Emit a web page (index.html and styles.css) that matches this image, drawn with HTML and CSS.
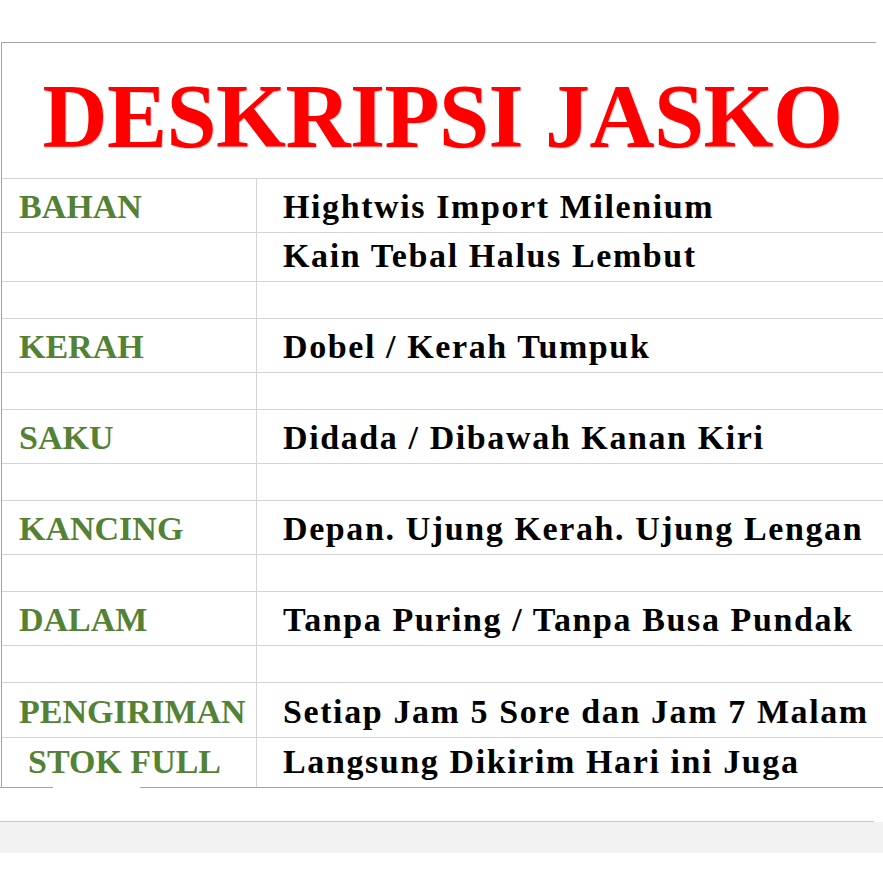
FILE: index.html
```html
<!DOCTYPE html>
<html>
<head>
<meta charset="utf-8">
<link rel="stylesheet" href="styles.css">
</head>
<body>
<div class="page">
  <div class="spacer"></div>
  <div class="topline"></div>
  <div class="sheet">
    <div class="title-row"><h1 class="title">DESKRIPSI JASKO</h1></div>
    <div class="row r54"><div class="label">BAHAN</div><div class="value">Hightwis Import Milenium</div></div>
    <div class="row r49"><div class="label"></div><div class="value">Kain Tebal Halus Lembut</div></div>
    <div class="row r37"><div class="label"></div><div class="value"></div></div>
    <div class="row r54"><div class="label">KERAH</div><div class="value">Dobel / Kerah Tumpuk</div></div>
    <div class="row r37"><div class="label"></div><div class="value"></div></div>
    <div class="row r54"><div class="label">SAKU</div><div class="value">Didada / Dibawah Kanan Kiri</div></div>
    <div class="row r37"><div class="label"></div><div class="value"></div></div>
    <div class="row r54"><div class="label">KANCING</div><div class="value">Depan. Ujung Kerah. Ujung Lengan</div></div>
    <div class="row r37"><div class="label"></div><div class="value"></div></div>
    <div class="row r54"><div class="label">DALAM</div><div class="value">Tanpa Puring / Tanpa Busa Pundak</div></div>
    <div class="row r37"><div class="label"></div><div class="value"></div></div>
    <div class="row r55"><div class="label">PENGIRIMAN</div><div class="value">Setiap Jam 5 Sore dan Jam 7 Malam</div></div>
    <div class="row r48 last"><div class="label indent">STOK FULL</div><div class="value">Langsung Dikirim Hari ini Juga</div></div>
  </div>
  <div class="bottomline"></div>
  <div class="gap"></div>
  <div class="bandline"></div>
  <div class="band"></div>
</div>
</body>
</html>
```

FILE: styles.css
```css
* { box-sizing: border-box; }
html, body { margin: 0; padding: 0; background: #ffffff; }
body { width: 883px; height: 883px; overflow: hidden; }
.page { width: 883px; }
.spacer { height: 42px; }
.topline { height: 1px; width: 875px; margin-left: 1px; background: #a3a3a3; }
.sheet {
  margin-left: 1px;
  border-left: 1px solid #a3a3a3;
  width: 882px;
}
.title-row {
  height: 136px;
  border-bottom: 1px solid #d4d4d4;
  padding-top: 29px;
  display: flex;
  justify-content: center;
}
.title {
  margin: 0;
  font-family: "Liberation Serif", serif;
  font-weight: bold;
  font-size: 90px;
  line-height: 90px;
  color: #ff0000;
  letter-spacing: -0.5px;
  white-space: nowrap;
  text-shadow: 1px 1px 0 #ffd0d0;
}
.row {
  display: grid;
  grid-template-columns: 255px 1fr;
  border-bottom: 1px solid #d4d4d4;
}
.row.last { border-bottom: none; }
.r54 { height: 54px; }
.r49 { height: 49px; }
.r48 { height: 49px; }
.r55 { height: 55px; }
.r37 { height: 37px; }
.label, .value {
  display: flex;
  align-items: flex-end;
  padding-bottom: 6px;
  white-space: nowrap;
  font-family: "Liberation Serif", serif;
  font-weight: bold;
  font-size: 34px;
  line-height: 38px;
}
.label {
  border-right: 1px solid #d4d4d4;
  padding-left: 17px;
  color: #548235;
  letter-spacing: 0px;
}
.label.indent { padding-left: 26px; }
.value {
  padding-left: 26px;
  color: #000000;
  letter-spacing: 1.6px;
  overflow: visible;
}
.bottomline {
  height: 1px;
  width: 883px;
  background: linear-gradient(to right, #a3a3a3 0, #a3a3a3 53px, #ffffff 53px, #ffffff 140px, #a3a3a3 140px);
}
.gap { height: 33px; }
.bandline { height: 1px; width: 874px; background: #c8c8c8; }
.band { height: 31px; width: 883px; background: #f2f2f2; }
```
